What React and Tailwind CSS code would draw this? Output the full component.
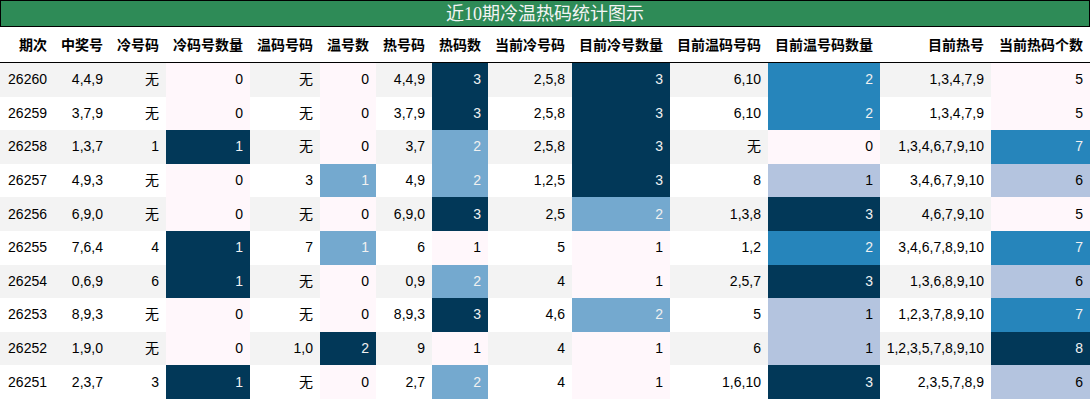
import React from "react";

const headers = [
  "期次", "中奖号", "冷号码", "冷码号数量", "温码号码", "温号数", "热号码", "热码数",
  "当前冷号码", "目前冷号数量", "目前温码号码", "目前温号码数量", "目前热号", "当前热码个数",
];

const rows = [
  ["26260", "4,4,9", "无", 0, "无", 0, "4,4,9", 3, "2,5,8", 3, "6,10", 2, "1,3,4,7,9", 5],
  ["26259", "3,7,9", "无", 0, "无", 0, "3,7,9", 3, "2,5,8", 3, "6,10", 2, "1,3,4,7,9", 5],
  ["26258", "1,3,7", "1", 1, "无", 0, "3,7", 2, "2,5,8", 3, "无", 0, "1,3,4,6,7,9,10", 7],
  ["26257", "4,9,3", "无", 0, "3", 1, "4,9", 2, "1,2,5", 3, "8", 1, "3,4,6,7,9,10", 6],
  ["26256", "6,9,0", "无", 0, "无", 0, "6,9,0", 3, "2,5", 2, "1,3,8", 3, "4,6,7,9,10", 5],
  ["26255", "7,6,4", "4", 1, "7", 1, "6", 1, "5", 1, "1,2", 2, "3,4,6,7,8,9,10", 7],
  ["26254", "0,6,9", "6", 1, "无", 0, "0,9", 2, "4", 1, "2,5,7", 3, "1,3,6,8,9,10", 6],
  ["26253", "8,9,3", "无", 0, "无", 0, "8,9,3", 3, "4,6", 2, "5", 1, "1,2,3,7,8,9,10", 7],
  ["26252", "1,9,0", "无", 0, "1,0", 2, "9", 1, "4", 1, "6", 1, "1,2,3,5,7,8,9,10", 8],
  ["26251", "2,3,7", "3", 1, "无", 0, "2,7", 2, "4", 1, "1,6,10", 3, "2,3,5,7,8,9", 6],
];

// PuBu colormap stops for each numeric column (min..max)
const P0 = "bg-[#fff7fb] text-black";
const P13 = "bg-[#b4c4df] text-black";
const P12 = "bg-[#74a9cf] text-[#f1f1f1]";
const P23 = "bg-[#2685bb] text-[#f1f1f1]";
const P1 = "bg-[#023858] text-[#f1f1f1]";

const colorMaps = {
  3: { 0: P0, 1: P1 },
  5: { 0: P0, 1: P12, 2: P1 },
  7: { 1: P0, 2: P12, 3: P1 },
  9: { 1: P0, 2: P12, 3: P1 },
  11: { 0: P0, 1: P13, 2: P23, 3: P1 },
  13: { 5: P0, 6: P13, 7: P23, 8: P1 },
};

const grid =
  "grid grid-cols-[54px_56px_56px_84px_70px_56px_56px_56px_84px_98px_98px_112px_111px_99px]";

export default function App() {
  return (
    <div
      className="w-[1090px] h-[401px] bg-white overflow-hidden"
      style={{ fontFamily: '"Liberation Sans", "Noto Sans CJK SC", sans-serif' }}
    >
      <div
        className="h-[27px] border border-black bg-[#2e8b57] flex items-center justify-center text-[18px] leading-none text-[#f4f4f4]"
        style={{ fontFamily: '"Liberation Serif", "Noto Sans CJK SC", serif' }}
      >
        近10期冷温热码统计图示
      </div>
      <div className={`${grid} h-[36px] border-b border-black`}>
        {headers.map((h) => (
          <div
            key={h}
            className="flex items-center justify-end px-[7px] text-[14px] font-bold text-black whitespace-nowrap"
            style={{ fontFamily: '"Noto Sans CJK SC", "Liberation Sans", sans-serif' }}
          >
            {h}
          </div>
        ))}
      </div>
      {rows.map((r, i) => (
        <div
          key={r[0]}
          className={`${grid} h-[33.6px] ${i % 2 === 0 ? "bg-[#f3f3f3]" : "bg-white"}`}
        >
          {r.map((v, j) => {
            const cm = colorMaps[j];
            const cls = cm ? cm[v] : "text-black";
            return (
              <div
                key={j}
                className={`flex items-center justify-end px-[7px] text-[14px] whitespace-nowrap ${cls}`}
              >
                {v}
              </div>
            );
          })}
        </div>
      ))}
    </div>
  );
}
